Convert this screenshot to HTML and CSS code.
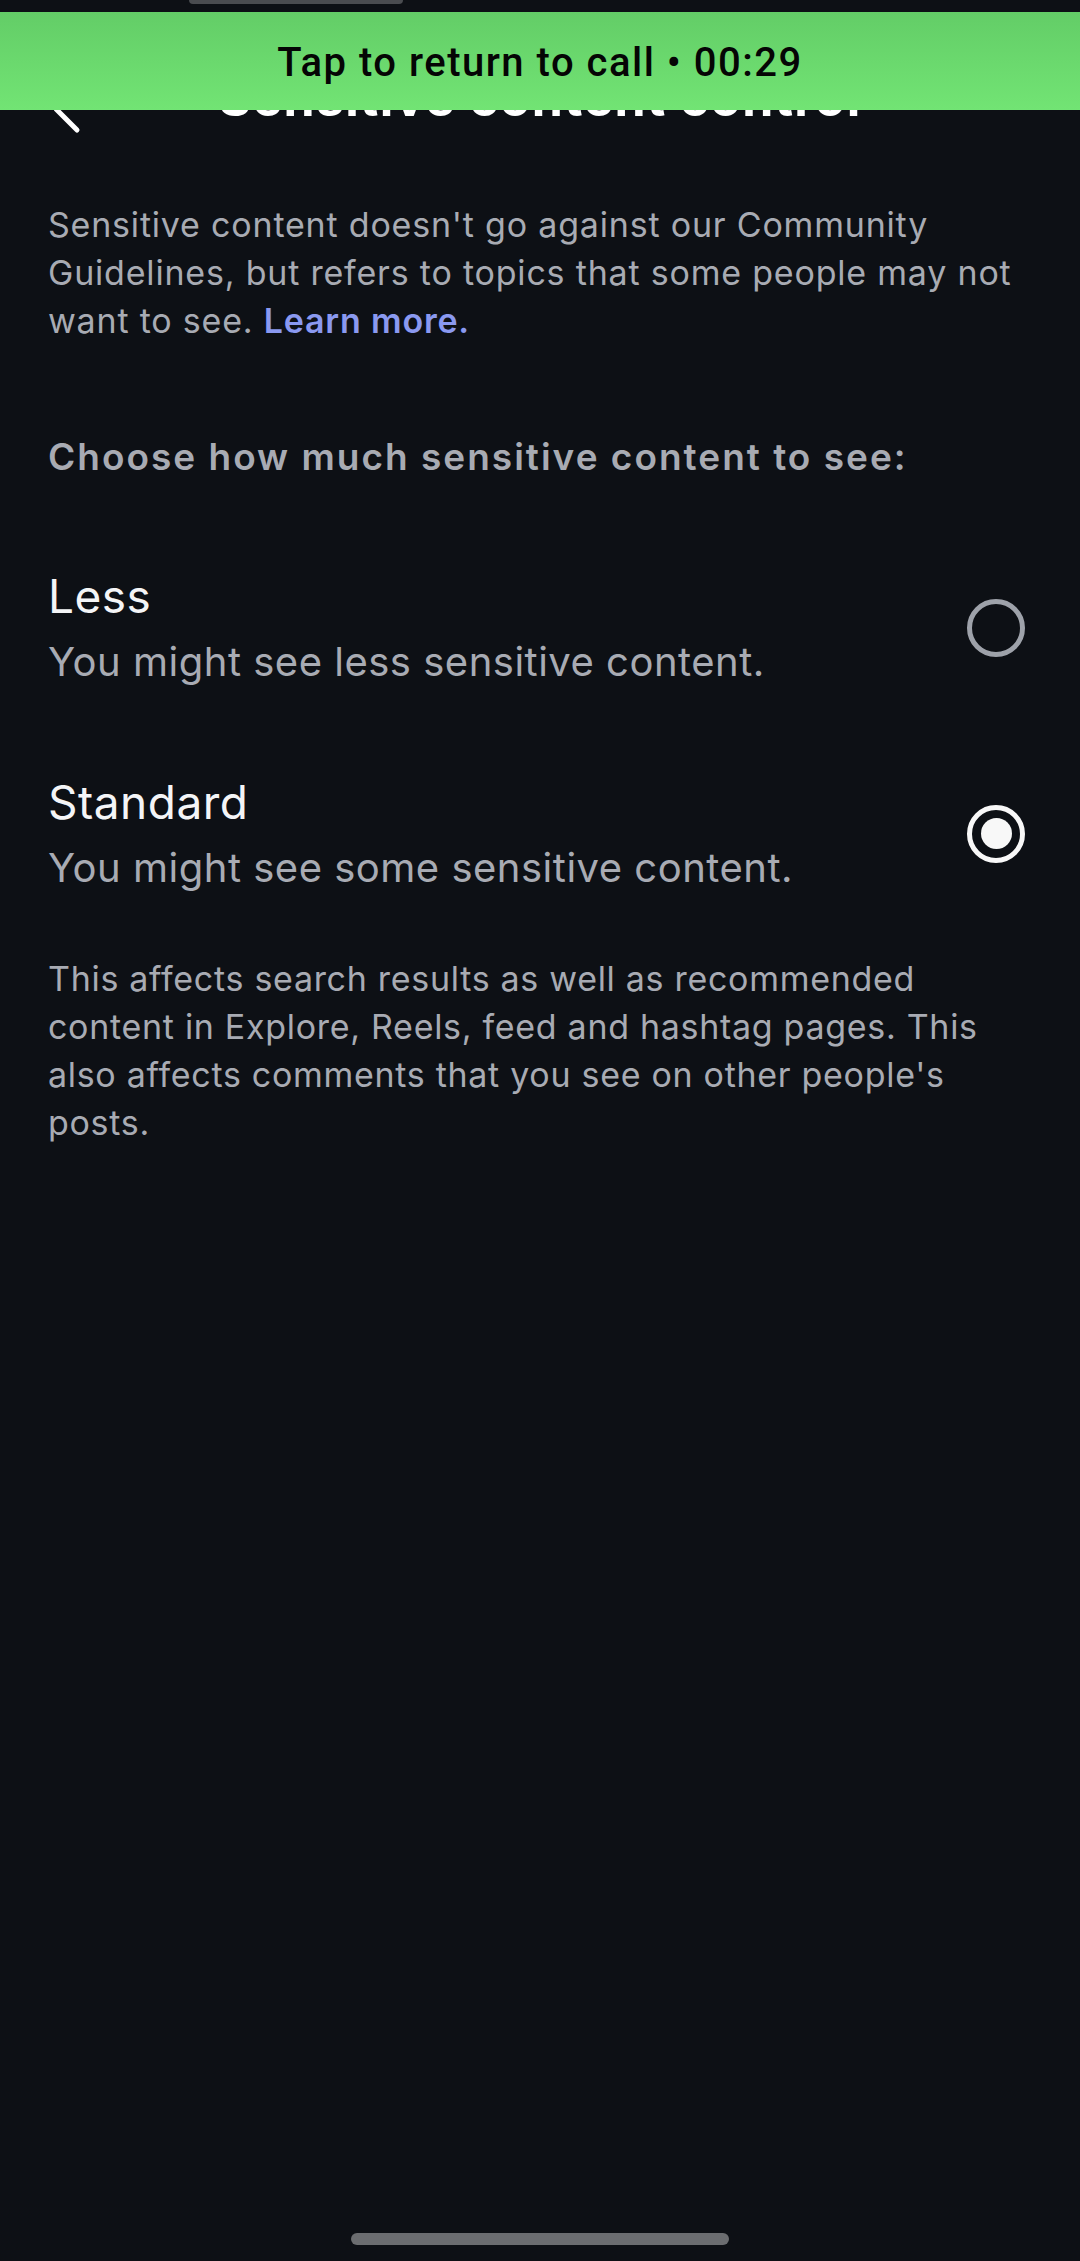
FILE: index.html
```html
<!DOCTYPE html>
<html lang="en">
<head>
<meta charset="utf-8">
<title>Sensitive content control</title>
<link rel="stylesheet" href="styles.css">
</head>
<body>
<div class="screen">
  <div class="topstrip"><div class="notch"></div></div>
  <div class="callbar">Tap to return to call • 00:29</div>
  <header class="header">
    <svg class="back" width="34" height="54" viewBox="0 0 34 54"><path d="M27 6 L6 27 L27 48" fill="none" stroke="#fff" stroke-width="5" stroke-linecap="round" stroke-linejoin="round"/></svg>
    <h1 class="title">Sensitive content control</h1>
  </header>
  <main class="content">
    <p class="intro">Sensitive content doesn't go against our Community Guidelines, but refers to topics that some people may not want to see. <span class="link">Learn more.</span></p>
    <h2 class="choose">Choose how much sensitive content to see:</h2>
    <div class="option">
      <div class="opt-text">
        <div class="opt-title">Less</div>
        <div class="opt-sub">You might see less sensitive content.</div>
      </div>
      <div class="radio"></div>
    </div>
    <div class="option">
      <div class="opt-text">
        <div class="opt-title">Standard</div>
        <div class="opt-sub">You might see some sensitive content.</div>
      </div>
      <div class="radio checked"><div class="dot"></div></div>
    </div>
    <p class="footer">This affects search results as well as recommended content in Explore, Reels, feed and hashtag pages. This also affects comments that you see on other people's posts.</p>
  </main>
  <div class="homebar"></div>
</div>
</body>
</html>
```
FILE: styles.css
```css
* { box-sizing: border-box; }
html, body { margin: 0; padding: 0; }
body {
  background: #0d1015;
  font-family: Inter, "Noto Sans", sans-serif;
  color: #a8abb3;
}
.screen {
  position: relative;
  width: 1080px;
  height: 2261px;
  display: flex;
  flex-direction: column;
  overflow: hidden;
}
.topstrip {
  height: 12px;
  flex: none;
}
.notch {
  margin-left: 189px;
  width: 214px;
  height: 4px;
  background: #4a4c50;
  border-radius: 0 0 4px 4px;
}
.callbar {
  position: absolute;
  top: 12px;
  left: 0;
  right: 0;
  height: 98px;
  background: linear-gradient(#63cd67, #72e474);
  color: #050505;
  font-family: Roboto, sans-serif;
  font-size: 40px;
  letter-spacing: 1.5px;
  font-weight: 500;
  display: flex;
  align-items: center;
  justify-content: center;
  padding-top: 2px;
  z-index: 2;
}
.header {
  position: relative;
  height: 130px;
  flex: none;
  display: flex;
  justify-content: center;
  align-items: flex-end;
}
.back {
  position: absolute;
  left: 50px;
  top: 70px;
}
.title {
  margin: 0 0 14px 0;
  font-size: 50px;
  line-height: 60px;
  font-weight: 700;
  letter-spacing: 1.3px;
  color: #fff;
}
.content {
  padding: 0 55px 0 48px;
}
.intro {
  margin: 59px 0 0 0;
  font-size: 34px;
  line-height: 48px;
  letter-spacing: 0.8px;
}
.link {
  color: #8a99f0;
  font-weight: 600;
}
.choose {
  margin: 88px 0 0 0;
  font-size: 37px;
  line-height: 48px;
  font-weight: 600;
  letter-spacing: 2px;
}
.option {
  display: flex;
  align-items: center;
  justify-content: space-between;
  margin-top: 87px;
}
.option + .option {
  margin-top: 86px;
}
.opt-title {
  font-size: 46px;
  line-height: 56px;
  letter-spacing: 0.5px;
  color: #f4f5f7;
}
.opt-sub {
  margin-top: 12px;
  font-size: 40px;
  line-height: 52px;
  letter-spacing: 0.5px;
  color: #a8abb3;
}
.radio {
  width: 58px;
  height: 58px;
  border: 5px solid #9ea2aa;
  border-radius: 50%;
  margin-bottom: 1px;
  display: flex;
  align-items: center;
  justify-content: center;
  flex: none;
}
.radio.checked {
  border-color: #f8f8f8;
}
.dot {
  width: 31px;
  height: 31px;
  border-radius: 50%;
  background: #f8f8f8;
}
.footer {
  margin: 61px 0 0 0;
  font-size: 34px;
  line-height: 48px;
  letter-spacing: 0.7px;
}
.homebar {
  position: absolute;
  left: 351px;
  top: 2233px;
  width: 378px;
  height: 12px;
  border-radius: 6px;
  background: #6b6d70;
}
```
